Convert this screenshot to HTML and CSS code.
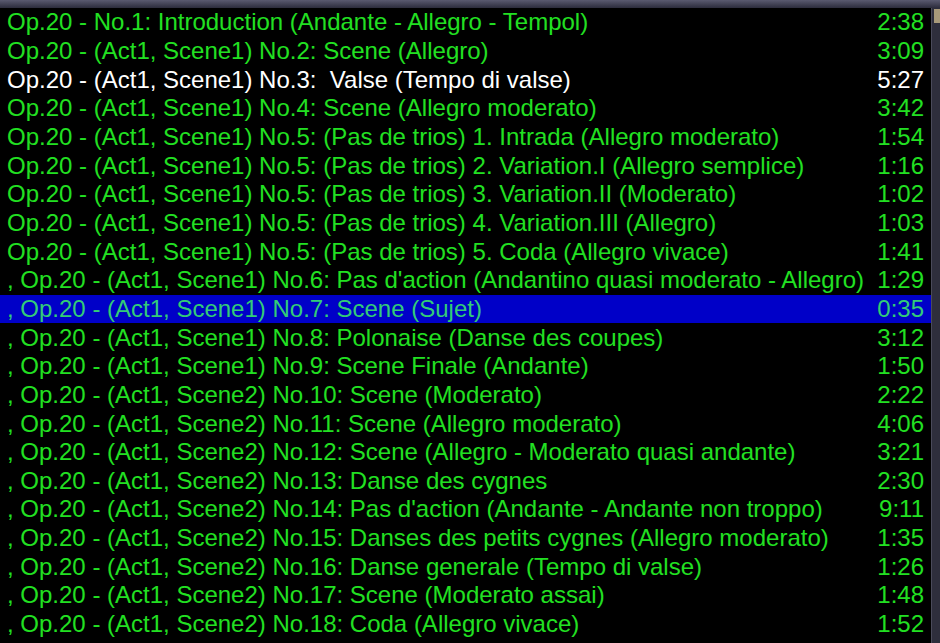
FILE: index.html
```html
<!DOCTYPE html>
<html lang="en">
<head>
    <meta charset="UTF-8">
    <meta name="viewport" content="width=device-width, initial-scale=1.0">
    <title>Playlist</title>
    <link rel="stylesheet" href="styles.css">
</head>
<body>

    <div class="window">
        <div class="titlebar"></div>

        <div class="main">
            <ul class="playlist">
                <li class="track"><span class="title">Op.20 - No.1: Introduction (Andante - Allegro - Tempol)</span><span class="time">2:38</span></li>
                <li class="track"><span class="title">Op.20 - (Act1, Scene1) No.2: Scene (Allegro)</span><span class="time">3:09</span></li>
                <li class="track playing"><span class="title">Op.20 - (Act1, Scene1) No.3:  Valse (Tempo di valse)</span><span class="time">5:27</span></li>
                <li class="track"><span class="title">Op.20 - (Act1, Scene1) No.4: Scene (Allegro moderato)</span><span class="time">3:42</span></li>
                <li class="track"><span class="title">Op.20 - (Act1, Scene1) No.5: (Pas de trios) 1. Intrada (Allegro moderato)</span><span class="time">1:54</span></li>
                <li class="track"><span class="title">Op.20 - (Act1, Scene1) No.5: (Pas de trios) 2. Variation.I (Allegro semplice)</span><span class="time">1:16</span></li>
                <li class="track"><span class="title">Op.20 - (Act1, Scene1) No.5: (Pas de trios) 3. Variation.II (Moderato)</span><span class="time">1:02</span></li>
                <li class="track"><span class="title">Op.20 - (Act1, Scene1) No.5: (Pas de trios) 4. Variation.III (Allegro)</span><span class="time">1:03</span></li>
                <li class="track"><span class="title">Op.20 - (Act1, Scene1) No.5: (Pas de trios) 5. Coda (Allegro vivace)</span><span class="time">1:41</span></li>
                <li class="track"><span class="title">, Op.20 - (Act1, Scene1) No.6: Pas d'action (Andantino quasi moderato - Allegro)</span><span class="time">1:29</span></li>
                <li class="track selected"><span class="title">, Op.20 - (Act1, Scene1) No.7: Scene (Sujet)</span><span class="time">0:35</span></li>
                <li class="track"><span class="title">, Op.20 - (Act1, Scene1) No.8: Polonaise (Danse des coupes)</span><span class="time">3:12</span></li>
                <li class="track"><span class="title">, Op.20 - (Act1, Scene1) No.9: Scene Finale (Andante)</span><span class="time">1:50</span></li>
                <li class="track"><span class="title">, Op.20 - (Act1, Scene2) No.10: Scene (Moderato)</span><span class="time">2:22</span></li>
                <li class="track"><span class="title">, Op.20 - (Act1, Scene2) No.11: Scene (Allegro moderato)</span><span class="time">4:06</span></li>
                <li class="track"><span class="title">, Op.20 - (Act1, Scene2) No.12: Scene (Allegro - Moderato quasi andante)</span><span class="time">3:21</span></li>
                <li class="track"><span class="title">, Op.20 - (Act1, Scene2) No.13: Danse des cygnes</span><span class="time">2:30</span></li>
                <li class="track"><span class="title">, Op.20 - (Act1, Scene2) No.14: Pas d'action (Andante - Andante non troppo)</span><span class="time">9:11</span></li>
                <li class="track"><span class="title">, Op.20 - (Act1, Scene2) No.15: Danses des petits cygnes (Allegro moderato)</span><span class="time">1:35</span></li>
                <li class="track"><span class="title">, Op.20 - (Act1, Scene2) No.16: Danse generale (Tempo di valse)</span><span class="time">1:26</span></li>
                <li class="track"><span class="title">, Op.20 - (Act1, Scene2) No.17: Scene (Moderato assai)</span><span class="time">1:48</span></li>
                <li class="track"><span class="title">, Op.20 - (Act1, Scene2) No.18: Coda (Allegro vivace)</span><span class="time">1:52</span></li>
            </ul>

            <div class="scrollbar">
                <div class="thumb"></div>
            </div>
        </div>
    </div>

</body>
</html>
```

FILE: styles.css
```css
body {
    margin: 0;
    background-color: #000000;
    font-family: "Liberation Sans", Arial, sans-serif;
    overflow: hidden;
}
.window {
    width: 940px;
    height: 643px;
    display: flex;
    flex-direction: column;
}
.titlebar {
    height: 8px;
    background: linear-gradient(#5a5a70, #2c2c3c);
    flex-shrink: 0;
}
.main {
    display: flex;
    flex: 1;
    min-height: 0;
}
.playlist {
    list-style: none;
    margin: 0;
    padding: 0;
    flex: 1;
    background: #000000;
}
.track {
    display: flex;
    justify-content: space-between;
    align-items: center;
    height: 28.67px;
    padding: 0 7px 0 7px;
    font-size: 24px;
    color: #22e022;
    white-space: pre;
}
.track.playing {
    color: #ffffff;
}
.track.selected {
    background: #0000c8;
    color: #33cc77;
}
.scrollbar {
    width: 8px;
    background: #2e2e3c;
    border-left: 1px solid #4a4a5a;
    position: relative;
}
.thumb {
    position: absolute;
    top: 1px;
    left: 2px;
    width: 6px;
    height: 14px;
    background: #a89a7a;
}
```
